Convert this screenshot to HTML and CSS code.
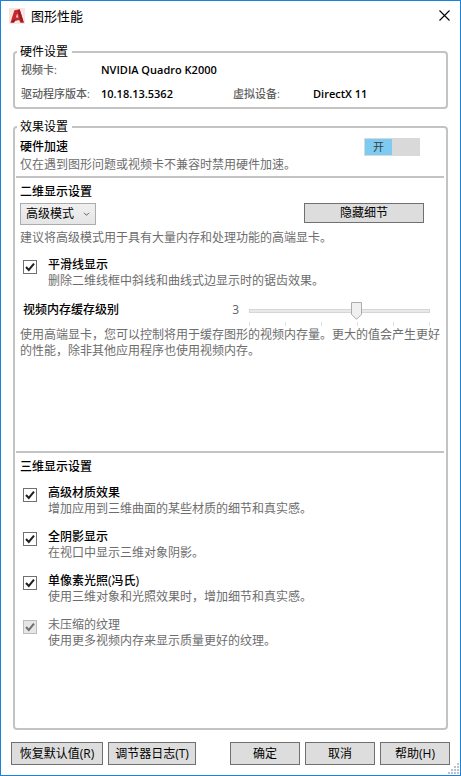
FILE: index.html
```html
<!DOCTYPE html>
<html lang="zh-CN">
<head>
  <meta charset="UTF-8">
  <meta name="viewport" content="width=device-width, initial-scale=1.0">
  <title>图形性能</title>
  <link rel="stylesheet" href="styles.css">
</head>
<body>
  <header class="titlebar">
    <svg class="logo" viewBox="0 0 16 16" width="16" height="16" aria-hidden="true">
      <rect width="16" height="16" fill="#f8e6e2"/>
      <path d="M1.5 14.5 5.4 2.2 10.6 1.2 14.8 14.5h-3.8l-.7-2.6H6.2l-1.2 2.6z" fill="#c8292f"/>
      <path d="M10.6 1.2l4.2 13.3h-2.6L8.8 3z" fill="#9c1c22"/>
      <path d="M8.2 5.4 6.8 9.4h2.7z" fill="#f3c9c5"/>
      <path d="M1.5 14.5 5 11.8l5.4.1-4.2.8-1.2 1.8z" fill="#8e191e"/>
    </svg>
    <h1>图形性能</h1>
    <button class="close" aria-label="关闭">
      <svg viewBox="0 0 11 11" width="11" height="11"><path d="M.5.5l10 10M10.5.5l-10 10" stroke="#000" stroke-width="1.1"/></svg>
    </button>
  </header>

  <main>
    <fieldset>
      <legend>硬件设置</legend>
      <dl class="specs">
        <dt>视频卡:</dt>
        <dd class="wide">NVIDIA Quadro K2000</dd>
        <dt>驱动程序版本:</dt>
        <dd>10.18.13.5362</dd>
        <dt>虚拟设备:</dt>
        <dd>DirectX 11</dd>
      </dl>
    </fieldset>

    <fieldset class="effects">
      <legend>效果设置</legend>
      <section class="accel">
        <div class="row">
          <h2>硬件加速</h2>
          <button class="switch" role="switch" aria-checked="true" aria-label="硬件加速"><span>开</span></button>
        </div>
        <p>仅在遇到图形问题或视频卡不兼容时禁用硬件加速。</p>
      </section>

      <section class="panel">
        <h2>二维显示设置</h2>
        <div class="row mode">
          <select aria-label="二维显示模式">
            <option>高级模式</option>
            <option>基本模式</option>
          </select>
          <button class="btn details">隐藏细节</button>
        </div>
        <p>建议将高级模式用于具有大量内存和处理功能的高端显卡。</p>
        <div class="option smooth">
          <input type="checkbox" id="smooth" checked>
          <label for="smooth">平滑线显示</label>
          <p>删除二维线框中斜线和曲线式边显示时的锯齿效果。</p>
        </div>
        <div class="row cache">
          <label for="cache">视频内存缓存级别</label>
          <output for="cache">3</output>
          <div class="slider">
            <input type="range" id="cache" min="0" max="5" value="3">
            <div class="ticks"><i></i><i></i><i></i><i></i><i></i><i></i></div>
          </div>
        </div>
        <p>使用高端显卡，您可以控制将用于缓存图形的视频内存量。更大的值会产生更好的性能，除非其他应用程序也使用视频内存。</p>
      </section>

      <section class="panel">
        <h2>三维显示设置</h2>
        <div class="options">
          <div class="option">
            <input type="checkbox" id="material" checked>
            <label for="material">高级材质效果</label>
            <p>增加应用到三维曲面的某些材质的细节和真实感。</p>
          </div>
          <div class="option">
            <input type="checkbox" id="shadow" checked>
            <label for="shadow">全阴影显示</label>
            <p>在视口中显示三维对象阴影。</p>
          </div>
          <div class="option">
            <input type="checkbox" id="pixel" checked>
            <label for="pixel">单像素光照(冯氏)</label>
            <p>使用三维对象和光照效果时，增加细节和真实感。</p>
          </div>
          <div class="option">
            <input type="checkbox" id="texture" checked disabled>
            <label for="texture">未压缩的纹理</label>
            <p>使用更多视频内存来显示质量更好的纹理。</p>
          </div>
        </div>
      </section>
    </fieldset>
  </main>

  <footer>
    <button class="btn reset">恢复默认值(R)</button>
    <button class="btn log">调节器日志(T)</button>
    <button class="btn ok">确定</button>
    <button class="btn">取消</button>
    <button class="btn">帮助(H)</button>
    <svg class="grip" viewBox="0 0 11 11" width="11" height="11" aria-hidden="true">
      <path d="M9 0h2v2h-2zM6 3h2v2h-2zM9 3h2v2h-2zM3 6h2v2h-2zM6 6h2v2h-2zM9 6h2v2h-2zM0 9h2v2h-2zM3 9h2v2h-2zM6 9h2v2h-2zM9 9h2v2h-2z" fill="#bcc0cc"/>
    </svg>
  </footer>
</body>
</html>
```

FILE: styles.css
```css
* {
  box-sizing: border-box;
}
body {
  margin: 0;
  min-height: 100vh;
  display: flex;
  flex-direction: column;
  position: relative;
  border: 1px solid #1883d7;
  background: #fff;
  color: #000;
  font: 12px/16px "Open Sans", "Noto Sans CJK SC", sans-serif;
}
h1, h2, p, dl, dd {
  margin: 0;
}
button, select, input {
  margin: 0;
  font: inherit;
  color: inherit;
}
h2 {
  font-size: 12px;
  font-weight: 500;
}
p {
  color: #6d6d6d;
}

.titlebar {
  display: flex;
  align-items: center;
  gap: 6px;
  height: 29px;
  padding: 0 10px 0 8px;
}
.titlebar h1 {
  flex: 1;
  font-size: 13px;
  font-weight: 400;
}
.close {
  display: flex;
  padding: 0;
  border: none;
  background: none;
}

main {
  flex: 1;
  display: flex;
  flex-direction: column;
  gap: 10px;
  padding: 14px 12px 0;
}
fieldset {
  min-width: 0;
  margin: 0;
  padding: 0 2px 0 1px;
  border: 2px solid #c3c3c3;
  border-radius: 4px;
}
legend {
  margin-left: 1px;
  padding: 0 4px 0 3px;
  height: 16px;
}

.specs {
  display: grid;
  grid-template-columns: 80px 132px 80px 1fr;
  row-gap: 8px;
  padding: 2px 5px 5px;
  font-size: 11px;
  font-weight: 500;
}
.specs dt {
  color: #5f5f5f;
}
.specs dd {
  font-weight: 600;
}
.specs .wide {
  grid-column: span 3;
}

.effects {
  flex: 1;
}
.row {
  display: flex;
  align-items: center;
  justify-content: space-between;
}
.accel {
  padding: 3px 4px;
}
.accel .row {
  margin-bottom: 1px;
  padding-right: 20px;
}
.switch {
  width: 56px;
  height: 18px;
  padding: 1px;
  border: none;
  background: #d9d9d9;
  color: #404040;
  font-size: 11px;
}
.switch span {
  display: block;
  width: 27px;
  background: #7ecbf1;
}
.panel {
  min-height: 275px;
  padding: 6px 4px 4px;
  border-top: 2px solid #c3c3c3;
}
.mode {
  align-items: flex-start;
  margin: 3px 0 5px;
  padding-right: 16px;
}
select {
  appearance: none;
  width: 76px;
  height: 22px;
  padding: 0 5px;
  border: 1px solid #acacac;
  border-radius: 0;
  background: url("data:image/svg+xml,%3Csvg xmlns='http://www.w3.org/2000/svg' width='7' height='5'%3E%3Cpath d='M1 .8l2.5 2.5L6 .8' fill='none' stroke='%23606060'/%3E%3C/svg%3E") no-repeat right 5px center, linear-gradient(#f0f0f0, #e5e5e5);
}
.btn {
  width: 70px;
  height: 23px;
  padding: 0;
  border: 1px solid #707070;
  background: #ddd;
  white-space: nowrap;
}
.details {
  width: 120px;
  height: 20px;
  line-height: 18px;
}

.option {
  display: grid;
  grid-template-columns: 25px 1fr;
  padding-left: 3px;
}
.option label,
.cache label {
  font-weight: 500;
}
.option p {
  grid-column: 2;
}
.smooth {
  margin: 11px 0 13px;
}
.options {
  display: grid;
  gap: 12px;
  margin-top: 10px;
}
input[type="checkbox"] {
  appearance: none;
  grid-row: span 2;
  width: 14px;
  height: 14px;
  margin-top: 3px;
  border: 1px solid #707070;
  background: #fff;
}
input[type="checkbox"]:checked {
  background: #fff url("data:image/svg+xml,%3Csvg xmlns='http://www.w3.org/2000/svg' width='12' height='12'%3E%3Cpath d='M2 6l2.8 3L10 2.6' fill='none' stroke='%23212121' stroke-width='2'/%3E%3C/svg%3E") center no-repeat;
}
input[type="checkbox"]:disabled {
  border-color: #bcbcbc;
  background: #e6e6e6 url("data:image/svg+xml,%3Csvg xmlns='http://www.w3.org/2000/svg' width='12' height='12'%3E%3Cpath d='M2 6l2.8 3L10 2.6' fill='none' stroke='%23707070' stroke-width='2'/%3E%3C/svg%3E") center no-repeat;
}
.option input:disabled + label {
  color: #6d6d6d;
  font-weight: 400;
}

.cache {
  align-items: flex-start;
  padding: 0 10px 0 3px;
}
.cache label {
  flex: 1;
}
.cache output {
  margin-right: 10px;
  color: #5f5f5f;
}
.slider {
  width: 181px;
}
input[type="range"] {
  appearance: none;
  display: block;
  width: 100%;
  height: 18px;
  background: none;
}
input[type="range"]::-webkit-slider-runnable-track {
  height: 4px;
  border: 1px solid #d6d6d6;
  background: #e7eaea;
}
input[type="range"]::-webkit-slider-thumb {
  appearance: none;
  width: 11px;
  height: 18px;
  margin-top: -8px;
  background: url("data:image/svg+xml,%3Csvg xmlns='http://www.w3.org/2000/svg' width='11' height='18'%3E%3Cpath d='M.5.5h10v11.8l-5 5-5-5z' fill='%23f0f0f0' stroke='%23acacac'/%3E%3C/svg%3E") no-repeat;
}
.ticks {
  display: flex;
  justify-content: space-between;
  margin: 2px 0 1px;
}
.ticks i {
  width: 1px;
  height: 4px;
  background: #e0e0e0;
}

footer {
  display: flex;
  gap: 5px;
  padding: 12px 10px 10px;
}
.reset {
  width: 92px;
}
.log {
  width: 88px;
}
.ok {
  margin-left: auto;
}
.grip {
  position: absolute;
  right: 1px;
  bottom: 1px;
}
```
